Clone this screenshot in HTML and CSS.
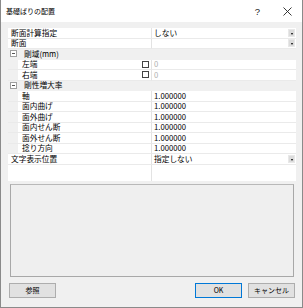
FILE: index.html
```html
<!DOCTYPE html>
<html lang="ja">
<head>
<meta charset="utf-8">
<link rel="stylesheet" href="styles.css">
</head>
<body>
<div class="win">
  <div class="titlebar">
    <span class="title">基礎ばりの配置</span>
    <span class="help">?</span>
    <svg class="close" width="9" height="9" viewBox="0 0 9 9"><path d="M0.5 0.5 L8.5 8.5 M8.5 0.5 L0.5 8.5" stroke="#222" stroke-width="0.9" fill="none"/></svg>
  </div>
  <div class="content">
    <div class="grid">
      <div class="row"><div class="lbl">断面計算指定</div><div class="val">しない<span class="dd"></span></div></div>
      <div class="row"><div class="lbl">断面</div><div class="val"><span class="dd"></span></div></div>
      <div class="row cat"><div class="lbl"><span class="tog"></span>剛域(mm)</div><div class="val"></div></div>
      <div class="row child"><div class="lbl"><span class="margin"></span><span class="txt">左端</span><span class="chk"></span></div><div class="val dim">0</div></div>
      <div class="row child"><div class="lbl"><span class="margin"></span><span class="txt">右端</span><span class="chk"></span></div><div class="val dim">0</div></div>
      <div class="row cat"><div class="lbl"><span class="tog"></span>剛性増大率</div><div class="val"></div></div>
      <div class="row child"><div class="lbl"><span class="margin"></span><span class="txt">軸</span></div><div class="val">1.000000</div></div>
      <div class="row child"><div class="lbl"><span class="margin"></span><span class="txt">面内曲げ</span></div><div class="val">1.000000</div></div>
      <div class="row child"><div class="lbl"><span class="margin"></span><span class="txt">面外曲げ</span></div><div class="val">1.000000</div></div>
      <div class="row child"><div class="lbl"><span class="margin"></span><span class="txt">面内せん断</span></div><div class="val">1.000000</div></div>
      <div class="row child"><div class="lbl"><span class="margin"></span><span class="txt">面外せん断</span></div><div class="val">1.000000</div></div>
      <div class="row child"><div class="lbl"><span class="margin"></span><span class="txt">捻り方向</span></div><div class="val">1.000000</div></div>
      <div class="row"><div class="lbl">文字表示位置</div><div class="val">指定しない<span class="dd"></span></div></div>
      <div class="filler"><div class="lbl"></div><div class="val"></div></div>
    </div>
    <div class="desc"></div>
    <div class="buttons">
      <button class="btn">参照</button>
      <span class="spacer"></span>
      <button class="btn ok">OK</button>
      <button class="btn">キャンセル</button>
    </div>
  </div>
</div>
</body>
</html>
```
FILE: styles.css
```css
html, body {
  margin: 0;
  padding: 0;
  background: #f0f0f0;
}
body {
  font-family: "Noto Sans CJK JP", "Noto Sans", sans-serif;
  color: #000;
}
.win {
  width: 303px;
  height: 308px;
  box-sizing: border-box;
  border: 1px solid #8a8a8a;
  border-top: none;
  background: #f0f0f0;
  display: flex;
  flex-direction: column;
}
.titlebar {
  height: 22px;
  background: #fff;
  display: flex;
  align-items: center;
  padding-left: 5px;
  flex: none;
}
.title {
  font-size: 7px;
  line-height: 1;
  flex: 1;
}
.help {
  font-family: "Liberation Sans", sans-serif;
  font-size: 9.5px;
  margin-right: 23px;
  color: #222;
}
.close {
  margin-right: 10px;
}
.content {
  flex: 1;
  display: flex;
  flex-direction: column;
  padding: 6px 6px 0 7px;
}
.grid {
  height: 153px;
  background: #fff;
  display: flex;
  flex-direction: column;
  flex: none;
}
.row {
  height: 10.5px;
  display: flex;
  flex: none;
  font-size: 7.7px;
  line-height: 10px;
}
.lbl {
  width: 144px;
  box-sizing: border-box;
  border-right: 1px solid #e3e3e3;
  border-bottom: 1px solid #eaeaea;
  padding-left: 3px;
  display: flex;
  align-items: center;
  white-space: nowrap;
  overflow: hidden;
}
.val {
  flex: 1;
  box-sizing: border-box;
  border-bottom: 1px solid #eaeaea;
  padding-left: 2px;
  display: flex;
  align-items: center;
  white-space: nowrap;
}
.dim {
  color: #b0b0b0;
}
.dd {
  margin-left: auto;
  margin-right: 1px;
  width: 7px;
  height: 8px;
  background: #dcdcdc;
  border: 1px solid #e8e8e8;
  box-sizing: border-box;
  position: relative;
}
.dd::after {
  content: "";
  position: absolute;
  left: 1.5px;
  top: 3px;
  border-left: 1.5px solid transparent;
  border-right: 1.5px solid transparent;
  border-top: 2px solid #000;
}
.cat .lbl, .cat .val {
  background: #f0f0f0;
  border-color: #f0f0f0;
}
.cat .lbl {
  padding-left: 2px;
}
.tog {
  width: 5px;
  height: 5px;
  border: 1px solid #a0a0a0;
  background: #fff;
  margin-right: 7px;
  position: relative;
  flex: none;
}
.tog::after {
  content: "";
  position: absolute;
  left: 1px;
  top: 2px;
  width: 3px;
  height: 1px;
  background: #555;
}
.child .lbl {
  padding-left: 0;
}
.margin {
  width: 10px;
  align-self: stretch;
  background: #f0f0f0;
  margin-bottom: -1px;
  flex: none;
}
.txt {
  padding-left: 4px;
  flex: 1;
}
.chk {
  width: 7px;
  height: 7px;
  box-sizing: border-box;
  border: 1px solid #444;
  background: #fff;
  margin-right: 2px;
  flex: none;
}
.filler {
  flex: 1;
  display: flex;
}
.filler .lbl, .filler .val {
  border-bottom: none;
}
.desc {
  margin: 3px 2px 0 2px;
  height: 93px;
  box-sizing: border-box;
  border: 1px solid #a8a8a8;
  border-top-color: #b8b8b8;
  background: #efefef;
  flex: none;
}
.buttons {
  display: flex;
  margin-top: 6px;
  padding: 0 1px 0 1px;
  gap: 6px;
}
.spacer {
  flex: 1;
}
.btn {
  width: 47px;
  height: 15px;
  margin: 0;
  padding: 0;
  background: #e1e1e1;
  border: 1px solid #adadad;
  font-family: "Noto Sans CJK JP", "Noto Sans", sans-serif;
  font-size: 7px;
  line-height: 13px;
  color: #000;
}
.btn.ok {
  border-color: #0078d7;
}
```
